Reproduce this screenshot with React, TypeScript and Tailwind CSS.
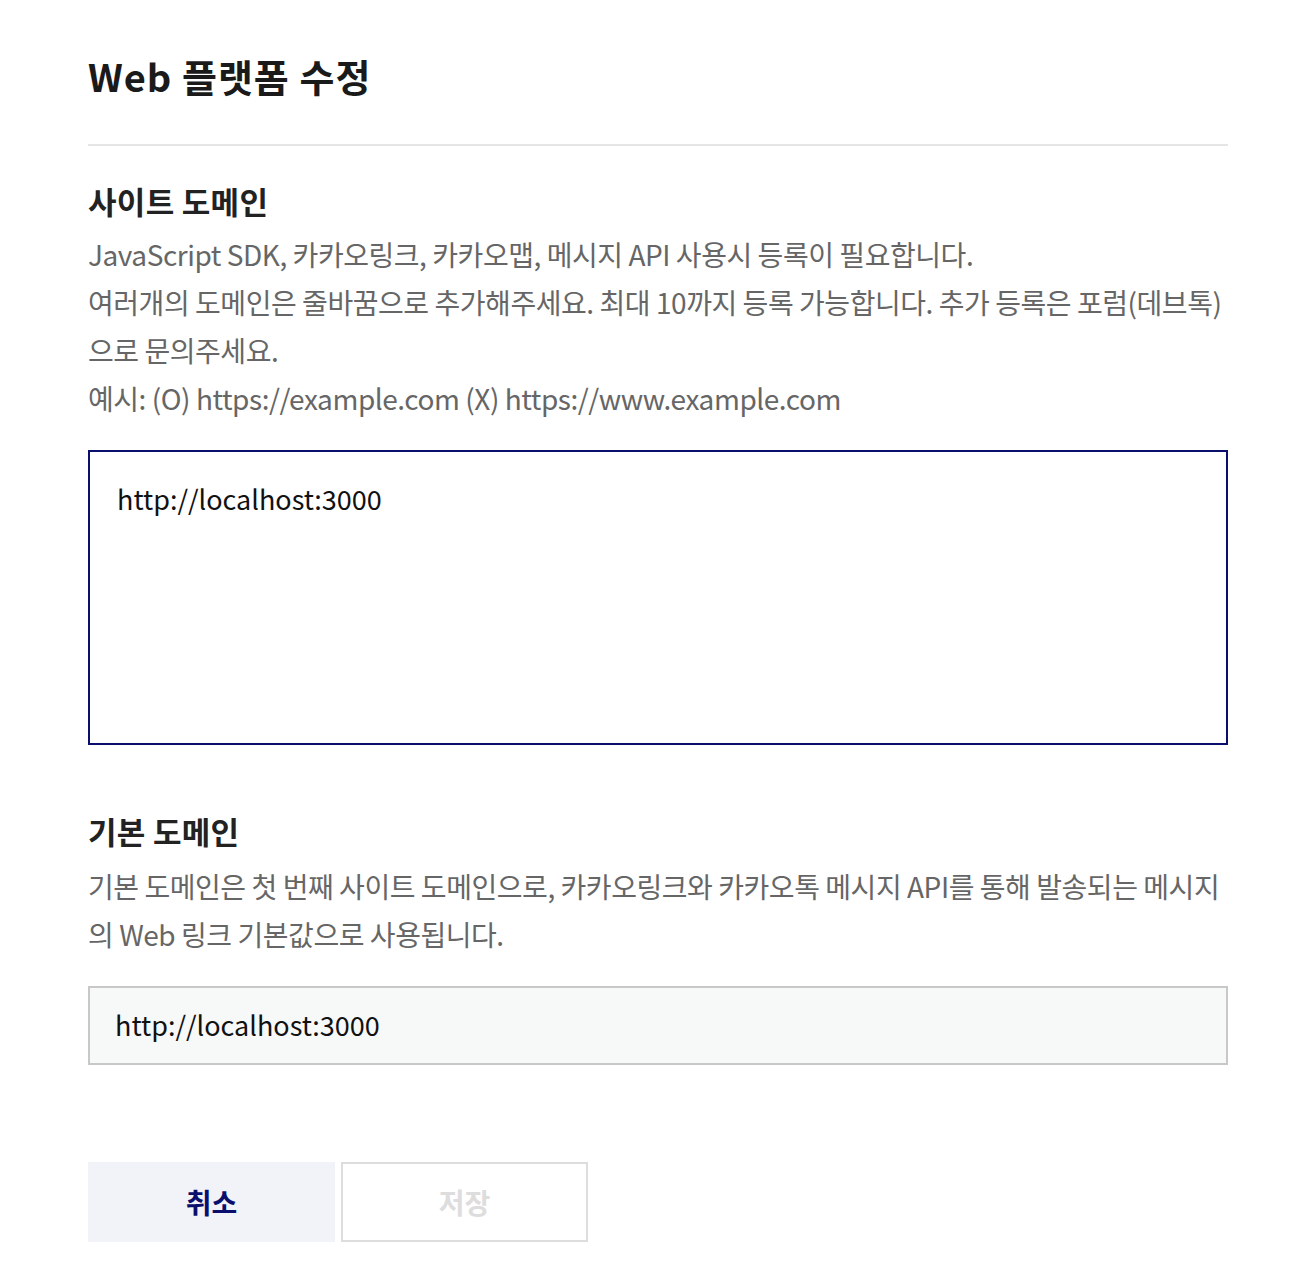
import React from 'react';

const font = { fontFamily: '"Noto Sans CJK KR", "Noto Sans", sans-serif' };

export default function App() {
  return (
    <div className="min-h-screen bg-white" style={font}>
      <div className="px-[88px] pt-[50px] w-[1316px]">
        {/* 제목 */}
        <h1 className="text-[38px] font-bold text-[#1a1a1a] leading-[52px] tracking-[1px]">Web 플랫폼 수정</h1>
        <div className="mt-[42px] h-[2px] bg-[#e5e5e5]" />

        {/* 사이트 도메인 */}
        <h2 className="mt-[35px] text-[31px] font-bold text-[#222] leading-[40px] tracking-[0.3px]">사이트 도메인</h2>
        <div className="mt-[9px] text-[28px] leading-[48px] text-[#666] tracking-[-0.45px]">
          <p>JavaScript SDK, 카카오링크, 카카오맵, 메시지 API 사용시 등록이 필요합니다.</p>
          <p>여러개의 도메인은 줄바꿈으로 추가해주세요. 최대 10까지 등록 가능합니다. 추가 등록은 포럼(데브톡)으로 문의주세요.</p>
          <p>예시: (O) https://example.com (X) https://www.example.com</p>
        </div>
        <textarea
          className="mt-[28px] block w-full h-[295px] border-2 border-[#0a0f6e] px-[27px] py-[27px] text-[27px] leading-[40px] text-[#111] resize-none outline-none"
          style={font}
          defaultValue="http://localhost:3000"
        />

        {/* 기본 도메인 */}
        <h2 className="mt-[66px] text-[31px] font-bold text-[#222] leading-[40px] tracking-[0.3px]">기본 도메인</h2>
        <div className="mt-[11px] text-[28px] leading-[48px] text-[#666] tracking-[-0.45px]">
          <p>기본 도메인은 첫 번째 사이트 도메인으로, 카카오링크와 카카오톡 메시지 API를 통해 발송되는 메시지의 Web 링크 기본값으로 사용됩니다.</p>
        </div>
        <div className="mt-[28px] h-[79px] border-2 border-[#c8c8c8] bg-[#f7f8f8] flex items-center px-[25px] text-[27px] text-[#111]">
          http://localhost:3000
        </div>

        {/* 버튼 */}
        <div className="mt-[97px] flex gap-[6px]">
          <button className="w-[247px] h-[80px] bg-[#f2f3f8] text-[28px] font-bold text-[#0a0f6e]" style={font}>취소</button>
          <button className="w-[247px] h-[80px] border-2 border-[#dddddd] bg-white text-[28px] font-bold text-[#dddddd]" style={font} disabled>저장</button>
        </div>
      </div>
    </div>
  );
}
